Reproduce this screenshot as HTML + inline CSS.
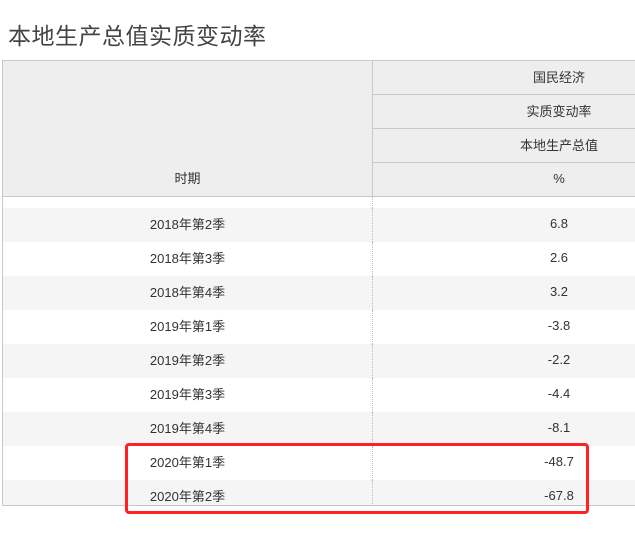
<!DOCTYPE html>
<html><head><meta charset="utf-8"><style>
body{margin:0;width:635px;height:533px;overflow:hidden;background:#fff;font-family:"Liberation Sans","Noto Sans CJK SC",sans-serif;color:#333;position:relative}
h1{position:absolute;left:8px;top:17px;margin:0;font-size:23px;font-weight:normal;color:#444;letter-spacing:0.5px}
.wrap{position:absolute;left:2px;top:60px;width:633px;height:446px;overflow:hidden;border-left:1px solid #c8c8c8;border-top:1px solid #c8c8c8;border-bottom:1px solid #c8c8c8;box-sizing:border-box}
table{border-collapse:collapse;width:742px;font-size:13px}
td{text-align:center;padding:0 0 3px 0;height:31px}
.h td{background:#eee}
.h td.l{border-right:1px solid #c8c8c8;border-bottom:1px solid #c8c8c8;vertical-align:bottom;padding-bottom:9px}
.h td.r{border-bottom:1px solid #c8c8c8}
.sp td{height:11px;padding:0}
.b td.l{border-right:1px dotted #bbb}
.g td{background:#f5f5f5}
.box{position:absolute;left:125px;top:443px;width:464px;height:71px;border:3px solid #f22;border-radius:4px;box-sizing:border-box}
</style></head><body>
<h1>本地生产总值实质变动率</h1>
<div class="wrap"><table>
<tr class="h"><td class="l" rowspan="4" style="width:369px">时期</td><td class="r" style="height:30px">国民经济</td></tr>
<tr class="h"><td class="r" style="height:30px">实质变动率</td></tr>
<tr class="h"><td class="r" style="height:30px">本地生产总值</td></tr>
<tr class="h"><td class="r" style="height:30px">%</td></tr>
<tr class="sp b"><td class="l"></td><td></td></tr>
<tr class="b g"><td class="l">2018年第2季</td><td>6.8</td></tr>
<tr class="b"><td class="l">2018年第3季</td><td>2.6</td></tr>
<tr class="b g"><td class="l">2018年第4季</td><td>3.2</td></tr>
<tr class="b"><td class="l">2019年第1季</td><td>-3.8</td></tr>
<tr class="b g"><td class="l">2019年第2季</td><td>-2.2</td></tr>
<tr class="b"><td class="l">2019年第3季</td><td>-4.4</td></tr>
<tr class="b g"><td class="l">2019年第4季</td><td>-8.1</td></tr>
<tr class="b"><td class="l">2020年第1季</td><td>-48.7</td></tr>
<tr class="b g"><td class="l">2020年第2季</td><td>-67.8</td></tr>
</table></div>
<div class="box"></div>
</body></html>
